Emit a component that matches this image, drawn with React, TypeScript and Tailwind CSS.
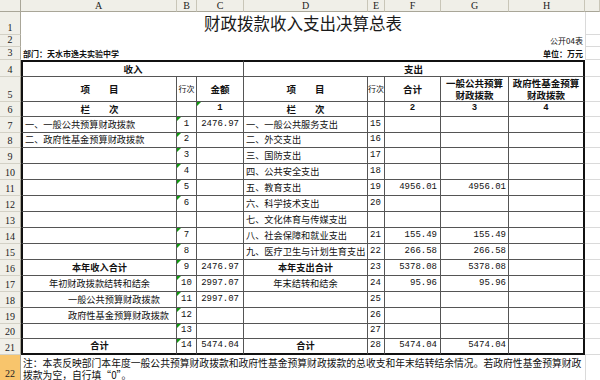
import React from "react";

// Excel-style sheet: 财政拨款收入支出决算总表

const cjk = "font-['Noto_Sans_CJK_SC',sans-serif]";
const mono = "font-['Liberation_Mono','Noto_Sans_CJK_SC',monospace]";
const serif = "font-['Liberation_Serif',serif]";

const headBg = "bg-[#f0efe8]";

interface DataRow {
  n: number;
  a?: string;
  aAlign?: "left" | "center" | "indent";
  bold?: boolean;
  b?: string;
  c?: string;
  d?: string;
  dAlign?: "left" | "center";
  e?: string;
  f?: string;
  g?: string;
  h?: string;
}

const rows: DataRow[] = [
  { n: 7, a: "一、一般公共预算财政拨款", b: "1", c: "2476.97", d: "一、一般公共服务支出", e: "15" },
  { n: 8, a: "二、政府性基金预算财政拨款", b: "2", d: "二、外交支出", e: "16" },
  { n: 9, b: "3", d: "三、国防支出", e: "17" },
  { n: 10, b: "4", d: "四、公共安全支出", e: "18" },
  { n: 11, b: "5", d: "五、教育支出", e: "19", f: "4956.01", g: "4956.01" },
  { n: 12, b: "6", d: "六、科学技术支出", e: "20" },
  { n: 13, d: "七、文化体育与传媒支出" },
  { n: 14, b: "7", d: "八、社会保障和就业支出", e: "21", f: "155.49", g: "155.49" },
  { n: 15, b: "8", d: "九、医疗卫生与计划生育支出", e: "22", f: "266.58", g: "266.58" },
  {
    n: 16,
    a: "本年收入合计",
    aAlign: "center",
    bold: true,
    b: "9",
    c: "2476.97",
    d: "本年支出合计",
    dAlign: "center",
    e: "23",
    f: "5378.08",
    g: "5378.08",
  },
  {
    n: 17,
    a: "年初财政拨款结转和结余",
    aAlign: "center",
    b: "10",
    c: "2997.07",
    d: "年末结转和结余",
    dAlign: "center",
    e: "24",
    f: "95.96",
    g: "95.96",
  },
  { n: 18, a: "一般公共预算财政拨款", aAlign: "indent", b: "11", c: "2997.07", e: "25" },
  { n: 19, a: "政府性基金预算财政拨款", aAlign: "indent", b: "12", e: "26" },
  { n: 20, b: "13", e: "27" },
  {
    n: 21,
    a: "合计",
    aAlign: "center",
    bold: true,
    b: "14",
    c: "5474.04",
    d: "合计",
    dAlign: "center",
    e: "28",
    f: "5474.04",
    g: "5474.04",
  },
];

const RowHead = ({ n, active }: { n: number | string; active?: boolean }) => (
  <div
    className={`flex items-end justify-center pb-px border-r border-b border-r-[#a9a698] border-b-[#d3d1c6] ${serif} text-[10px] leading-none text-[#222] ${
      active ? "bg-[#f8c56c]" : headBg
    }`}
  >
    {n}
  </div>
);

const Filler = ({ left }: { left?: boolean }) => (
  <div className={`bg-white border-b border-[#dadada] ${left ? "border-l" : ""}`} />
);

const Td = ({
  className = "",
  tri,
  children,
}: {
  className?: string;
  tri?: boolean;
  children?: React.ReactNode;
}) => (
  <div
    className={`relative flex items-center overflow-hidden whitespace-nowrap bg-white border-r border-b border-[#555] text-[#111] ${className}`}
  >
    {tri && (
      <span className="absolute left-0 top-0 border-t-[4px] border-r-[4px] border-t-[#119911] border-r-transparent" />
    )}
    {children}
  </div>
);

export default function App() {
  return (
    <div className="w-[600px] h-[380px] overflow-hidden bg-white">
      <div className="grid grid-cols-[21px_156px_20px_47px_124px_17px_56px_68px_76px_15px] grid-rows-[12px_23px_12px_13px_17px_25px_15px_16px_15px_16px_16px_16px_16px_16px_16px_16px_16px_16px_16px_16px_15px_16px_26px]">
        {/* column header */}
        <div className={`${headBg} border-r border-b border-r-[#a9a698] border-b-[#a9a698]`} />
        {["A", "B", "C", "D", "E", "F", "G", "H", ""].map((l, i) => (
          <div
            key={i}
            className={`flex items-center justify-center ${headBg} border-r border-b border-r-[#c9c6b8] border-b-[#a9a698] ${serif} text-[10px] leading-none text-[#222]`}
          >
            {l}
          </div>
        ))}

        {/* row 1: title */}
        <RowHead n={1} />
        <div className={`col-span-8 flex items-center justify-center bg-white ${cjk} text-[16.5px] leading-none text-[#1a1a1a]`}>
          财政拨款收入支出决算总表
        </div>
        <Filler left />

        {/* row 2 */}
        <RowHead n={2} />
        <div className={`col-span-8 flex items-center justify-end pr-[2px] bg-white ${cjk} text-[8px] leading-none text-[#111]`}>
          公开04表
        </div>
        <Filler left />

        {/* row 3 */}
        <RowHead n={3} />
        <div className={`col-span-8 flex items-center justify-between px-[2px] bg-white ${cjk} text-[8px] font-bold leading-none text-[#111]`}>
          <span>部门：天水市逸夫实验中学</span>
          <span>单位：万元</span>
        </div>
        <Filler left />

        {/* row 4 */}
        <RowHead n={4} />
        <Td className={`col-span-3 justify-center border-l-2 border-l-[#111] border-t-2 border-t-[#111] ${cjk} text-[9.5px] font-bold`}>
          收入
        </Td>
        <Td className={`col-span-5 justify-center border-r-2 border-r-[#111] border-t-2 border-t-[#111] ${cjk} text-[9.5px] font-bold`}>
          支出
        </Td>
        <Filler />

        {/* row 5 */}
        <RowHead n={5} />
        <Td className={`justify-center border-l-2 border-l-[#111] ${cjk} text-[9.5px] font-bold`}>项　　目</Td>
        <Td className={`justify-center ${cjk} text-[8px]`}>行次</Td>
        <Td className={`justify-center ${cjk} text-[9.5px] font-bold`}>金额</Td>
        <Td className={`justify-center ${cjk} text-[9.5px] font-bold`}>项　　目</Td>
        <Td className={`justify-start ${cjk} text-[8px]`}>行次</Td>
        <Td className={`justify-center ${cjk} text-[9.5px] font-bold`}>合计</Td>
        <Td className={`flex-col justify-center text-center ${cjk} text-[9.5px] font-bold leading-[12px]`}>
          <span className="leading-[11px]">一般公共预算</span>
          <span className="leading-[11px] mt-px">财政拨款</span>
        </Td>
        <Td className={`flex-col justify-center text-center border-r-2 border-r-[#111] ${cjk} text-[9.5px] font-bold leading-[12px]`}>
          <span className="leading-[11px]">政府性基金预算</span>
          <span className="leading-[11px] mt-px">财政拨款</span>
        </Td>
        <Filler />

        {/* row 6 */}
        <RowHead n={6} />
        <Td className={`justify-center border-l-2 border-l-[#111] ${cjk} text-[9.5px] font-bold`}>栏　　次</Td>
        <Td />
        <Td tri className={`justify-center ${mono} text-[9px] font-bold`}>1</Td>
        <Td className={`justify-center ${cjk} text-[9.5px] font-bold`}>栏　　次</Td>
        <Td />
        <Td className={`justify-center ${mono} text-[9px] font-bold`}>2</Td>
        <Td className={`justify-center ${mono} text-[9px] font-bold`}>3</Td>
        <Td className={`justify-center border-r-2 border-r-[#111] ${mono} text-[9px] font-bold`}>4</Td>
        <Filler />

        {/* rows 7-21 */}
        {rows.map((r) => {
          const last = r.n === 21;
          const bottom = last ? "border-b-2 border-b-[#111]" : "";
          const aAlign =
            r.aAlign === "center"
              ? "justify-center"
              : r.aAlign === "indent"
              ? "justify-start pl-[45px]"
              : "justify-start pl-[2px]";
          const dAlign = r.dAlign === "center" ? "justify-center" : "justify-start pl-[2px]";
          const weight = r.bold ? "font-bold" : "";
          return (
            <React.Fragment key={r.n}>
              <RowHead n={r.n} />
              <Td className={`${aAlign} border-l-2 border-l-[#111] ${bottom} ${cjk} text-[9.2px] ${weight}`}>
                {r.a}
              </Td>
              <Td tri={!!r.b} className={`justify-center ${bottom} ${mono} text-[9px]`}>
                {r.b}
              </Td>
              <Td className={`justify-end pr-[4px] ${bottom} ${mono} text-[9px]`}>{r.c}</Td>
              <Td className={`${dAlign} ${bottom} ${cjk} text-[9.2px] ${weight}`}>{r.d}</Td>
              <Td className={`justify-start pl-[2px] ${bottom} ${mono} text-[9px]`}>{r.e}</Td>
              <Td className={`justify-end pr-[3px] ${bottom} ${mono} text-[9px]`}>{r.f}</Td>
              <Td className={`justify-end pr-[2px] ${bottom} ${mono} text-[9px]`}>{r.g}</Td>
              <Td className={`justify-end pr-[2px] border-r-2 border-r-[#111] ${bottom} ${mono} text-[9px]`}>
                {r.h}
              </Td>
              <Filler />
            </React.Fragment>
          );
        })}

        {/* row 22: note */}
        <RowHead n={22} active />
        <div className={`col-span-8 bg-white pl-[2px] pt-[2px] ${cjk} text-[9.8px] leading-[12px] text-[#111]`}>
          <div className="whitespace-nowrap leading-[12px]">
            注：本表反映部门本年度一般公共预算财政拨款和政府性基金预算财政拨款的总收支和年末结转结余情况。若政府性基金预算财政
          </div>
          <div className="whitespace-nowrap leading-[12px]">拨款为空，自行填“0”。</div>
        </div>
        <Filler left />
      </div>
    </div>
  );
}
